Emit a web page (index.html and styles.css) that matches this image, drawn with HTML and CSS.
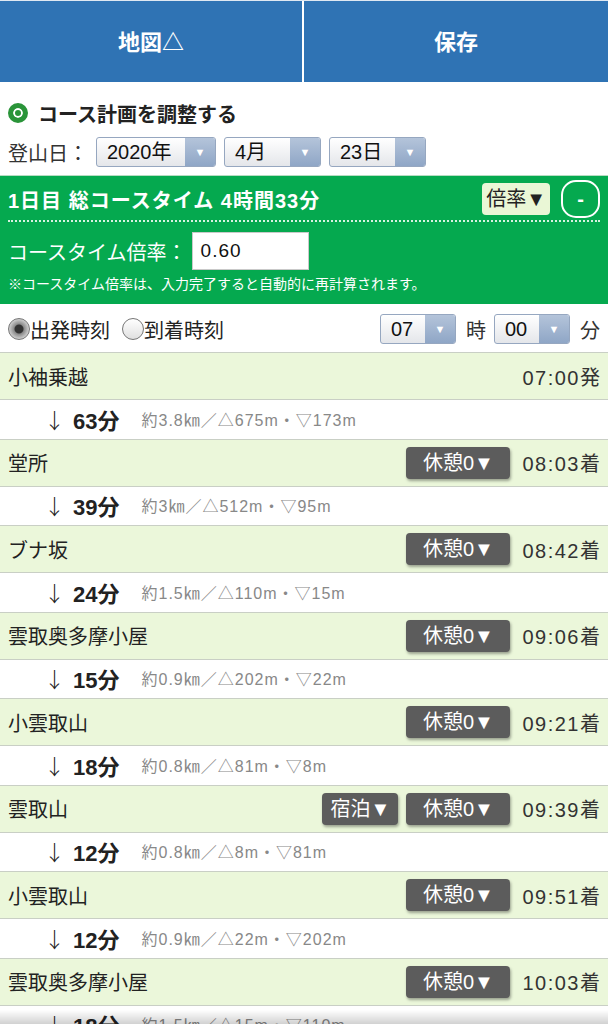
FILE: index.html
```html
<!DOCTYPE html>
<html lang="ja">
<head>
    <meta charset="UTF-8">
    <meta name="viewport" content="width=device-width, initial-scale=1.0">
    <title>コース計画</title>
    <link rel="stylesheet" href="styles.css">
</head>
<body>
    <div class="barra">
        <div class="barra-btn">地図△</div>
        <div class="barra-btn">保存</div>
    </div>

    <div class="titulo"><span class="icono-radio"></span>コース計画を調整する</div>

    <div class="fila-fecha">
        <span class="etiqueta">登山日：</span>
        <span class="sel sel-anio"><span class="sel-txt">2020年</span><span class="sel-flecha">▼</span></span>
        <span class="sel sel-mes"><span class="sel-txt">4月</span><span class="sel-flecha">▼</span></span>
        <span class="sel sel-dia"><span class="sel-txt">23日</span><span class="sel-flecha">▼</span></span>
    </div>

    <div class="caja-verde">
        <div class="caja-cabecera">
            <span class="caja-titulo">1日目 総コースタイム 4時間33分</span>
            <span class="btn-ratio">倍率▼</span>
            <span class="btn-menos">-</span>
        </div>
        <div class="fila-ratio">
            <span>コースタイム倍率：</span>
            <span class="input-ratio">0.60</span>
        </div>
        <div class="nota">※コースタイム倍率は、入力完了すると自動的に再計算されます。</div>
    </div>

    <div class="fila-hora">
        <span class="radio radio-on"></span><span>出発時刻</span>
        <span class="radio"></span><span>到着時刻</span>
        <span class="espacio"></span>
        <span class="sel sel-hora"><span class="sel-txt">07</span><span class="sel-flecha">▼</span></span>
        <span class="unidad">時</span>
        <span class="sel sel-hora"><span class="sel-txt">00</span><span class="sel-flecha">▼</span></span>
        <span class="unidad">分</span>
    </div>

    <div class="lista">
        <div class="punto">
            <span class="nombre">小袖乗越</span>
            <span class="hora">07:00発</span>
        </div>
        <div class="tramo"><span class="flecha">↓</span><b>63分</b><span class="detalle">約3.8㎞／△675m・▽173m</span></div>

        <div class="punto">
            <span class="nombre">堂所</span>
            <span class="btn-oscuro">休憩0▼</span>
            <span class="hora">08:03着</span>
        </div>
        <div class="tramo"><span class="flecha">↓</span><b>39分</b><span class="detalle">約3㎞／△512m・▽95m</span></div>

        <div class="punto">
            <span class="nombre">ブナ坂</span>
            <span class="btn-oscuro">休憩0▼</span>
            <span class="hora">08:42着</span>
        </div>
        <div class="tramo"><span class="flecha">↓</span><b>24分</b><span class="detalle">約1.5㎞／△110m・▽15m</span></div>

        <div class="punto">
            <span class="nombre">雲取奥多摩小屋</span>
            <span class="btn-oscuro">休憩0▼</span>
            <span class="hora">09:06着</span>
        </div>
        <div class="tramo"><span class="flecha">↓</span><b>15分</b><span class="detalle">約0.9㎞／△202m・▽22m</span></div>

        <div class="punto">
            <span class="nombre">小雲取山</span>
            <span class="btn-oscuro">休憩0▼</span>
            <span class="hora">09:21着</span>
        </div>
        <div class="tramo"><span class="flecha">↓</span><b>18分</b><span class="detalle">約0.8㎞／△81m・▽8m</span></div>

        <div class="punto">
            <span class="nombre">雲取山</span>
            <span class="btn-oscuro btn-corto">宿泊▼</span>
            <span class="btn-oscuro">休憩0▼</span>
            <span class="hora">09:39着</span>
        </div>
        <div class="tramo"><span class="flecha">↓</span><b>12分</b><span class="detalle">約0.8㎞／△8m・▽81m</span></div>

        <div class="punto">
            <span class="nombre">小雲取山</span>
            <span class="btn-oscuro">休憩0▼</span>
            <span class="hora">09:51着</span>
        </div>
        <div class="tramo"><span class="flecha">↓</span><b>12分</b><span class="detalle">約0.9㎞／△22m・▽202m</span></div>

        <div class="punto">
            <span class="nombre">雲取奥多摩小屋</span>
            <span class="btn-oscuro">休憩0▼</span>
            <span class="hora">10:03着</span>
        </div>
        <div class="tramo"><span class="flecha">↓</span><b>18分</b><span class="detalle">約1.5㎞／△15m・▽110m</span></div>
    </div>

    <div class="sombra-pie"></div>
</body>
</html>
```

FILE: styles.css
```css
/*
* estilos de la pagina de plan de ruta
*/
body {
    margin: 0;
    font-family: "Liberation Sans", "Noto Sans CJK JP", sans-serif;
    font-size: 20px;
    color: #222222;
    background: #ffffff;
}
.barra {
    display: grid;
    grid-template-columns: 302px 1fr;
    gap: 2px;
    background: #ffffff;
    border-top: 1px solid #dfe8f2;
}
.barra-btn {
    background: #2f73b4;
    color: #ffffff;
    font-weight: bold;
    font-size: 22px;
    height: 78px;
    padding-bottom: 3px;
    display: flex;
    align-items: center;
    justify-content: center;
}
.titulo {
    display: flex;
    align-items: center;
    font-weight: bold;
    margin: 18px 8px 0;
    height: 26px;
}
.icono-radio {
    width: 20px;
    height: 20px;
    border-radius: 50%;
    background: #2a9439;
    margin-right: 10px;
    box-sizing: border-box;
    border: 5px solid #2a9439;
    box-shadow: inset 0 0 0 2px #ffffff;
}
.fila-fecha {
    display: flex;
    align-items: center;
    gap: 8px;
    margin: 10px 8px 0;
    height: 32px;
}
.etiqueta {
    color: #333333;
}
.sel {
    display: inline-flex;
    height: 30px;
    box-sizing: border-box;
    border: 1px solid #96a7c0;
    border-radius: 3px;
    background: linear-gradient(#ffffff, #e4e6ea);
    overflow: hidden;
}
.sel-txt {
    flex: 1;
    padding-left: 10px;
    line-height: 28px;
    color: #111111;
}
.sel-flecha {
    width: 30px;
    background: linear-gradient(#b4c4da, #8fa6c6);
    color: #ffffff;
    font-size: 11px;
    display: flex;
    align-items: center;
    justify-content: center;
}
.sel-anio { width: 120px; }
.sel-mes { width: 97px; }
.sel-dia { width: 97px; }
.sel-hora { width: 76px; }
.caja-verde {
    background: #05a94f;
    color: #ffffff;
    margin-top: 7px;
    padding: 4px 8px 0;
    height: 124px;
    border-top: 1px solid #b7dcc2;
}
.caja-cabecera {
    display: flex;
    align-items: center;
    height: 38px;
    border-bottom: 2px dotted #d8f2e0;
    padding-bottom: 2px;
}
.caja-titulo {
    font-weight: bold;
    letter-spacing: 1px;
    flex: 1;
}
.btn-ratio {
    background: #eaf7d6;
    color: #222222;
    border-radius: 4px;
    padding: 3px 4px;
    margin-right: 11px;
    height: 26px;
    line-height: 26px;
}
.btn-menos {
    width: 39px;
    height: 38px;
    box-sizing: border-box;
    border: 2px solid #ffffff;
    border-radius: 15px;
    display: flex;
    align-items: center;
    justify-content: center;
    font-weight: bold;
}
.fila-ratio {
    display: flex;
    align-items: center;
    margin-top: 10px;
    height: 38px;
}
.input-ratio {
    background: #ffffff;
    color: #111111;
    width: 117px;
    height: 38px;
    box-sizing: border-box;
    border: 1px solid #c9c9c9;
    margin-left: 5px;
    padding-left: 8px;
    line-height: 36px;
    font-size: 19px;
    letter-spacing: 1px;
}
.nota {
    font-size: 14px;
    margin-top: 3px;
}
.fila-hora {
    display: flex;
    align-items: center;
    height: 32px;
    margin: 9px 8px 0;
}
.radio {
    width: 22px;
    height: 22px;
    box-sizing: border-box;
    border-radius: 50%;
    border: 1px solid #777777;
    background: linear-gradient(#ffffff, #e0e0e0);
}
.radio + span {
    margin-right: 12px;
}
.radio-on {
    background: radial-gradient(circle, #333333 0 4px, #8a8a8a 5px, #d0d0d0 10px);
}
.espacio { flex: 1; }
.unidad {
    margin: 0 8px 0 10px;
    color: #333333;
}
.unidad:last-child { margin-right: 0; }
.lista {
    margin-top: 7px;
}
.punto {
    display: flex;
    align-items: center;
    gap: 8px;
    background: #ebf7da;
    border-top: 1px solid #c9cfc5;
    border-bottom: 1px solid #c9cfc5;
    height: 46px;
    padding: 0 8px;
}
.nombre {
    flex: 1;
    color: #222222;
}
.hora {
    margin-left: 4px;
    color: #333333;
    letter-spacing: 1.5px;
    margin-right: -1.5px;
}
.btn-oscuro {
    background: #5c5c5c;
    color: #ffffff;
    border-radius: 4px;
    height: 32px;
    line-height: 32px;
    width: 104px;
    text-align: center;
    box-shadow: 1px 2px 3px rgba(0, 0, 0, 0.35);
}
.btn-corto {
    width: 76px;
}
.tramo {
    display: flex;
    align-items: center;
    height: 38.5px;
    padding-left: 44px;
    padding-bottom: 1px;
    box-sizing: border-box;
}
.flecha {
    font-family: "Noto Sans CJK JP", sans-serif;
    font-weight: 300;
    width: 20px;
    margin-right: 9px;
    font-size: 21px;
}
.tramo b {
    font-size: 22px;
    margin-right: 22px;
}
.detalle {
    font-size: 16px;
    letter-spacing: 1px;
    color: #888888;
}
/* sombra sobre el borde inferior */
.sombra-pie {
    position: fixed;
    left: 0;
    right: 0;
    bottom: 0;
    height: 14px;
    background: linear-gradient(rgba(0, 0, 0, 0), rgba(0, 0, 0, 0.18));
}
```
